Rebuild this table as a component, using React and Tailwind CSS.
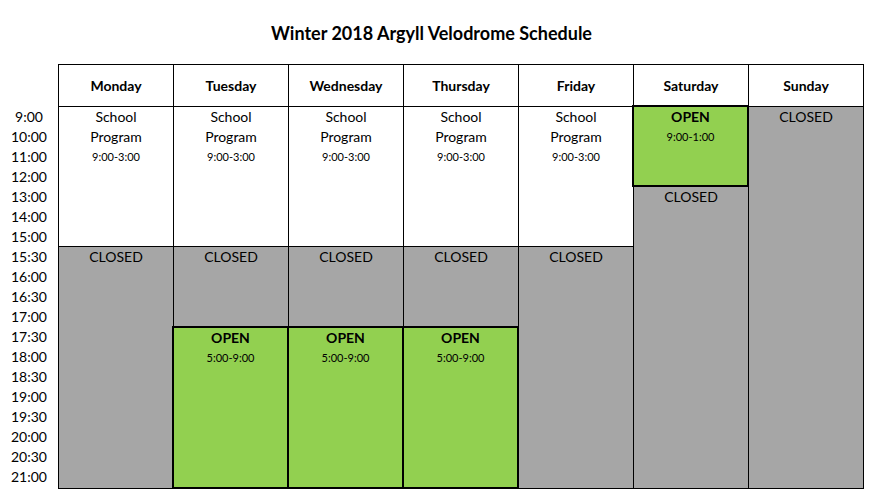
import React from "react";

const times = ["9:00","10:00","11:00","12:00","13:00","14:00","15:00","15:30","16:00","16:30","17:00","17:30","18:00","18:30","19:00","19:30","20:00","20:30","21:00"];

const headerCols = ["col-start-1","col-start-2","col-start-3","col-start-4","col-start-5","col-start-6","col-start-7"];
const days = ["Monday","Tuesday","Wednesday","Thursday","Friday","Saturday","Sunday"];

const cell = "flex flex-col items-center border-r border-b border-black text-[14px] leading-[20px]";
const gray = "bg-[#a6a6a6]";
const green = "flex flex-col items-center relative z-10 border-2 border-black bg-[#92d050] text-[14px] leading-[20px]";

function School({ col }) {
  return (
    <div className={`${col} row-start-2 row-span-7 bg-white ${cell}`}>
      <span>School</span>
      <span>Program</span>
      <span className="text-[11px]">9:00-3:00</span>
    </div>
  );
}

function Closed({ className }) {
  return (
    <div className={`${className} ${gray} ${cell}`}>
      <span>CLOSED</span>
    </div>
  );
}

function Open({ className, hours }) {
  return (
    <div className={`${className} ${green}`}>
      <span className="font-bold">OPEN</span>
      <span className="text-[11px]">{hours}</span>
    </div>
  );
}

export default function App() {
  return (
    <div className="w-[873px] h-[499px] bg-white text-black [font-family:Lato,sans-serif] overflow-hidden">
      <div className="h-[64px] flex items-center justify-center pt-[2px] pr-[10px] text-[18px] font-bold">
        Winter 2018 Argyll Velodrome Schedule
      </div>
      <div className="flex">
        <div className="w-[58px] flex flex-col pt-[43px] text-[14px] leading-[20px]">
          {times.map((t) => (
            <div key={t} className="h-[20px] text-center">{t}</div>
          ))}
        </div>
        <div className="grid grid-cols-[repeat(7,115px)] grid-rows-[42px_repeat(18,20px)_22px] border-l border-t border-black">
          {days.map((d, i) => (
            <div key={d} className={`${headerCols[i]} row-start-1 flex items-center justify-center border-r border-b border-black bg-white font-bold text-[14px]`}>
              {d}
            </div>
          ))}
          <School col="col-start-1" />
          <School col="col-start-2" />
          <School col="col-start-3" />
          <School col="col-start-4" />
          <School col="col-start-5" />

          <Closed className="col-start-1 row-start-9 row-span-12" />
          <Closed className="col-start-2 row-start-9 row-span-4" />
          <Closed className="col-start-3 row-start-9 row-span-4" />
          <Closed className="col-start-4 row-start-9 row-span-4" />
          <Closed className="col-start-5 row-start-9 row-span-12" />

          <Open className="col-start-2 row-start-13 row-span-8 -ml-[2px] -mt-px" hours="5:00-9:00" />
          <Open className="col-start-3 row-start-13 row-span-8 -ml-[2px] -mt-px" hours="5:00-9:00" />
          <Open className="col-start-4 row-start-13 row-span-8 -ml-[2px] -mt-px" hours="5:00-9:00" />

          <Closed className="col-start-6 row-start-6 row-span-15" />
          <Open className="col-start-6 row-start-2 row-span-4 -ml-[2px] -mt-[2px]" hours="9:00-1:00" />

          <Closed className="col-start-7 row-start-2 row-span-19" />
        </div>
      </div>
    </div>
  );
}
